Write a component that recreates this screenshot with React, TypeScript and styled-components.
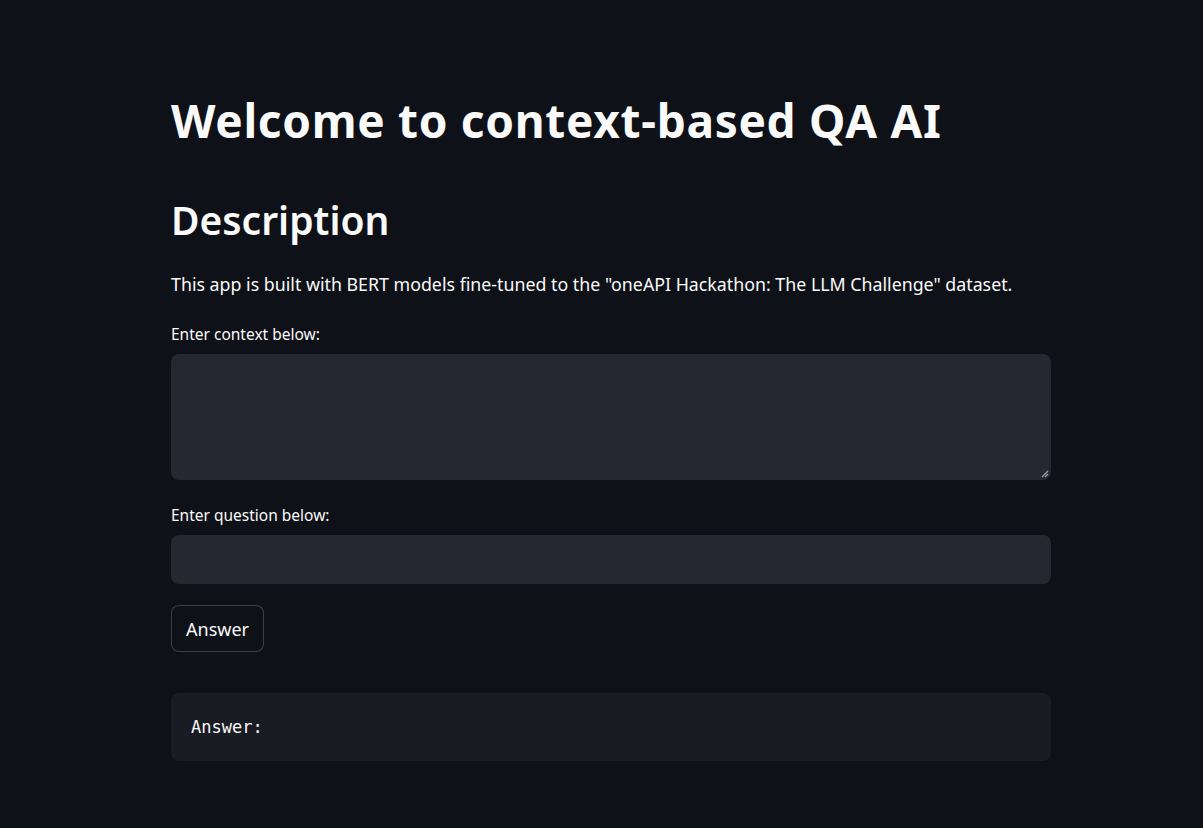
import React from "react";
import styled, { createGlobalStyle } from "styled-components";

const Global = createGlobalStyle`
  html, body { margin: 0; padding: 0; background: #0e1117; }
  body { font-family: "Noto Sans", sans-serif; color: #fafafa; }
  * { box-sizing: border-box; }
`;

const Page = styled.main`
  min-height: 828px;
  background: #0e1117;
  padding: 94px 0 60px 171px;
`;

const Column = styled.div`
  width: 880px;
  display: flex;
  flex-direction: column;
`;

const Title = styled.h1`
  margin: 0;
  font-family: "Noto Sans", sans-serif;
  font-weight: 700;
  font-size: 46px;
  line-height: 52px;
  letter-spacing: 0.7px;
  color: #fafafa;
`;

const Subtitle = styled.h2`
  margin: 51px 0 0;
  font-family: "Noto Sans", sans-serif;
  font-weight: 600;
  font-size: 39px;
  line-height: 46px;
  color: #fafafa;
`;

const Paragraph = styled.p`
  margin: 29px 0 0;
  font-size: 17.8px;
  line-height: 24px;
  color: #fafafa;
`;

const Label = styled.label<{ $gap: number }>`
  display: block;
  margin-top: ${(p) => p.$gap}px;
  font-size: 15.5px;
  line-height: 20px;
  color: #fafafa;
`;

const Field = styled.div<{ $h: number }>`
  position: relative;
  margin-top: 10px;
  height: ${(p) => p.$h}px;
  background: #262730;
  border-radius: 8px;
`;

const Grip = styled.svg`
  position: absolute;
  right: 2px;
  bottom: 2px;
`;

const Button = styled.button`
  margin-top: 21px;
  align-self: flex-start;
  width: 93px;
  height: 47px;
  padding: 0;
  background: #0e1117;
  border: 1px solid rgba(250, 250, 250, 0.2);
  border-radius: 8px;
  color: #fafafa;
  font-family: "Noto Sans", sans-serif;
  font-size: 18px;
`;

const CodeBlock = styled.pre`
  margin: 41px 0 0;
  height: 68px;
  display: flex;
  align-items: center;
  padding: 0 20px;
  background: #1a1c24;
  border-radius: 8px;
  font-family: "DejaVu Sans Mono", monospace;
  font-size: 17px;
  color: #fafafa;
`;

export default function App() {
  return (
    <>
      <Global />
      <Page>
        <Column>
          <Title>Welcome to context-based QA AI</Title>
          <Subtitle>Description</Subtitle>
          <Paragraph>
            This app is built with BERT models fine-tuned to the "oneAPI Hackathon: The LLM Challenge" dataset.
          </Paragraph>
          <Label $gap={28}>Enter context below:</Label>
          <Field $h={126}>
            <Grip width="10" height="10" viewBox="0 0 10 10">
              <path d="M9 3 L3 9 M9 6 L6 9" stroke="#9a9ba3" strokeWidth="1.4" />
            </Grip>
          </Field>
          <Label $gap={25}>Enter question below:</Label>
          <Field $h={49} />
          <Button>Answer</Button>
          <CodeBlock>Answer:</CodeBlock>
        </Column>
      </Page>
    </>
  );
}
